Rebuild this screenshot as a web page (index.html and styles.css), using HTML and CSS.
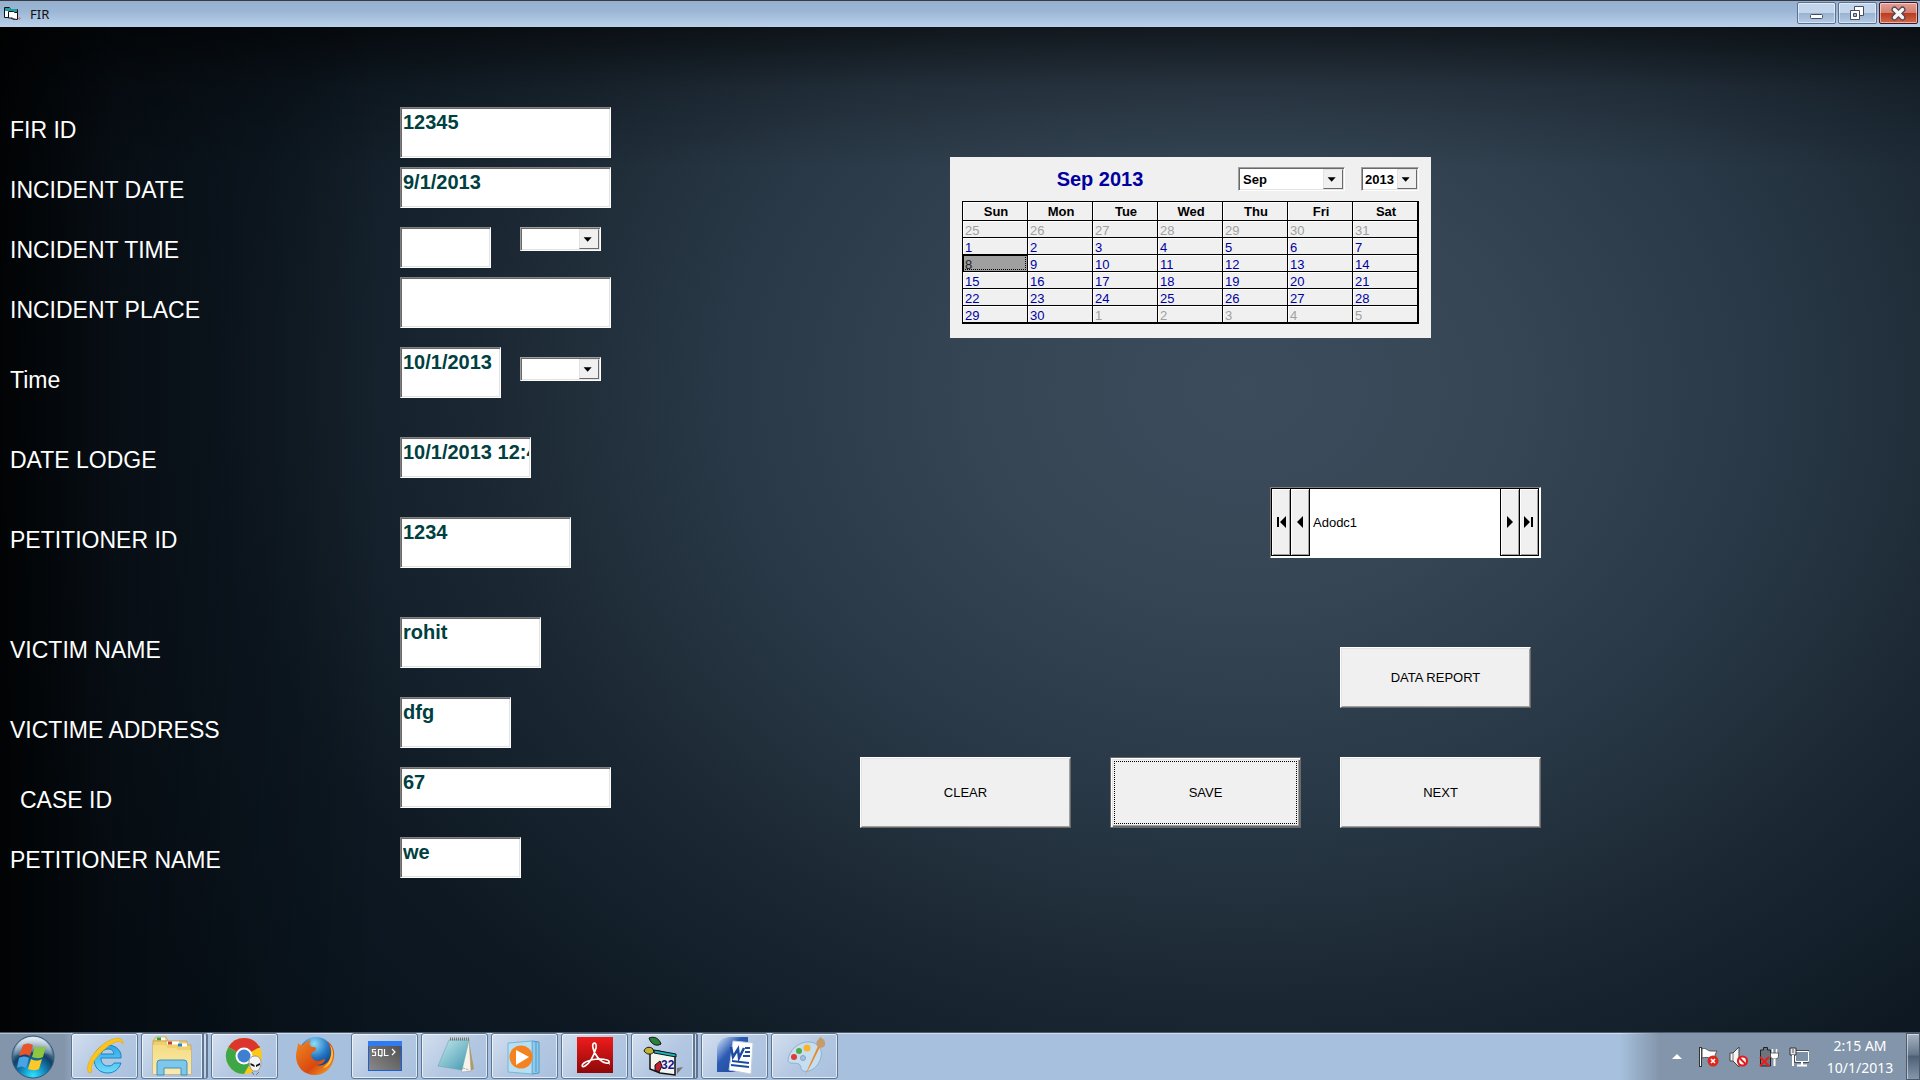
FILE: index.html
```html
<!DOCTYPE html>
<html lang="en">
<head>
<meta charset="utf-8">
<title>FIR</title>
<link rel="stylesheet" href="styles.css">
</head>
<body>
<header class="titlebar">
  <svg class="app-icon" width="17" height="14" viewBox="0 0 17 14" aria-hidden="true">
    <path d="M.500 .500h5l1 2h7v9h-2l-1 1-3-1-1-1H.500z" fill="#fff" stroke="#111"/>
    <path d="M1 1h4l1 1h7v3H9L8 4H1z" fill="#16a0a0"/>
    <path d="M4.500 4.500h5l1 1h3v7l-4-.500-1-1h-4z" fill="#fff" stroke="#111"/>
    <path d="M14 11.500h3M15.500 10v3" stroke="#d77"/>
  </svg>
  <span class="title">FIR</span>
  <div class="window-buttons">
    <button class="win-btn" type="button" aria-label="Minimize"><svg width="38" height="21" viewBox="0 0 38 21"><rect x="12.500" y="11.500" width="12" height="4" rx="1" fill="#fff" stroke="#444d5c"/></svg></button>
    <button class="win-btn" type="button" aria-label="Restore"><svg width="38" height="21" viewBox="0 0 38 21"><path d="M15.500 3.500h9v9h-9z" fill="#fff" stroke="#444d5c"/><path d="M11.500 7.500h9v9h-9z" fill="#fff" stroke="#444d5c"/><path d="M14.500 10.500h3v3h-3z" fill="#9fb6d2" stroke="#444d5c"/></svg></button>
    <button class="win-btn close" type="button" aria-label="Close"><svg width="38" height="21" viewBox="0 0 38 21"><path d="M14.500 6.500l8 8m0-8l-8 8" stroke="#4b4652" stroke-width="6" stroke-linecap="round"/><path d="M14.500 6.500l8 8m0-8l-8 8" stroke="#f5f5f5" stroke-width="3.500" stroke-linecap="round"/></svg></button>
  </div>
</header>

<main class="desktop">
  <form class="record">
    <div class="row p60"><label for="fir-id">FIR ID</label><input class="field tall full" id="fir-id" value="12345"></div>
    <div class="row p60"><label for="inc-date">INCIDENT DATE</label><input class="field full" id="inc-date" value="9/1/2013"></div>
    <div class="row p50"><label for="inc-time">INCIDENT TIME</label><input class="field w90" id="inc-time">
      <span class="combo ampm after90"><select aria-label="Incident time period"><option></option></select><svg class="arrow" width="20" height="20" viewBox="0 0 20 20"><path d="M4 8h9l-4.500 5z"/></svg></span></div>
    <div class="row p70 low"><label for="inc-place">INCIDENT PLACE</label><input class="field tall full" id="inc-place"></div>
    <div class="row p90 low"><label for="time">Time</label><input class="field tall w100" id="time" value="10/1/2013">
      <span class="combo ampm after100"><select aria-label="Time period"><option></option></select><svg class="arrow" width="20" height="20" viewBox="0 0 20 20"><path d="M4 8h9l-4.500 5z"/></svg></span></div>
    <div class="row p80"><label for="lodge">DATE LODGE</label><input class="field w130" id="lodge" value="10/1/2013 12:45:10 AM"></div>
    <div class="row p100"><label for="pet-id">PETITIONER ID</label><input class="field tall w170" id="pet-id" value="1234"></div>
    <div class="row p80 low"><label for="vic-name">VICTIM NAME</label><input class="field tall w140" id="vic-name" value="rohit"></div>
    <div class="row p70 low"><label for="vic-addr">VICTIME ADDRESS</label><input class="field tall w110" id="vic-addr" value="dfg"></div>
    <div class="row p70 low"><label class="indent" for="case-id">CASE ID</label><input class="field full" id="case-id" value="67"></div>
    <div class="row p60"><label for="pet-name">PETITIONER NAME</label><input class="field w120" id="pet-name" value="we"></div>
  </form>

  <section class="side">
    <div class="calendar">
      <div class="cal-head">
        <h2>Sep 2013</h2>
        <span class="combo month"><select aria-label="Month"><option>Sep</option></select><svg class="arrow" width="20" height="20" viewBox="0 0 20 20"><path d="M4 8h9l-4.500 5z"/></svg></span>
        <span class="combo year"><select aria-label="Year"><option>2013</option></select><svg class="arrow" width="20" height="20" viewBox="0 0 20 20"><path d="M4 8h9l-4.500 5z"/></svg></span>
      </div>
      <table>
        <thead><tr><th>Sun</th><th>Mon</th><th>Tue</th><th>Wed</th><th>Thu</th><th>Fri</th><th>Sat</th></tr></thead>
        <tbody>
          <tr class="other"><td>25</td><td>26</td><td>27</td><td>28</td><td>29</td><td>30</td><td>31</td></tr>
          <tr><td>1</td><td>2</td><td>3</td><td>4</td><td>5</td><td>6</td><td>7</td></tr>
          <tr><td class="selected">8</td><td>9</td><td>10</td><td>11</td><td>12</td><td>13</td><td>14</td></tr>
          <tr><td>15</td><td>16</td><td>17</td><td>18</td><td>19</td><td>20</td><td>21</td></tr>
          <tr><td>22</td><td>23</td><td>24</td><td>25</td><td>26</td><td>27</td><td>28</td></tr>
          <tr><td>29</td><td>30</td><td class="off">1</td><td class="off">2</td><td class="off">3</td><td class="off">4</td><td class="off">5</td></tr>
        </tbody>
      </table>
    </div>

    <div class="data-nav">
      <button type="button" aria-label="First record"><svg width="11" height="12" viewBox="0 0 11 12"><path d="M1 1h2v10H1zM10 0v12L4 6z"/></svg></button>
      <button type="button" aria-label="Previous record"><svg width="7" height="12" viewBox="0 0 7 12"><path d="M6 0v12L0 6z"/></svg></button>
      <span class="nav-caption">Adodc1</span>
      <button type="button" aria-label="Next record"><svg width="7" height="12" viewBox="0 0 7 12"><path d="M0 0v12l6-6z"/></svg></button>
      <button type="button" aria-label="Last record"><svg width="11" height="12" viewBox="0 0 11 12"><path d="M7 1h2v10H7zM0 0v12l6-6z"/></svg></button>
    </div>

    <button class="cmd report" type="button">DATA REPORT</button>
    <div class="commands">
      <button class="cmd" type="button">CLEAR</button>
      <button class="cmd default" type="button">SAVE</button>
      <button class="cmd" type="button">NEXT</button>
    </div>
  </section>
</main>

<footer class="taskbar">
  <svg width="0" height="0" class="defs" aria-hidden="true">
    <defs>
      <radialGradient id="orb" cx=".5" cy=".95" r=".9"><stop offset="0" stop-color="#2fe3ff"/><stop offset=".35" stop-color="#1183b8"/><stop offset=".6" stop-color="#123f66"/><stop offset="1" stop-color="#a9c3d6"/></radialGradient>
      <linearGradient id="gloss" x1="0" y1="0" x2="0" y2="1"><stop offset="0" stop-color="#fff" stop-opacity=".7"/><stop offset="1" stop-color="#fff" stop-opacity=".08"/></linearGradient>
      <linearGradient id="ie" x1="0" y1="0" x2="0" y2="1"><stop offset="0" stop-color="#2fa4e4"/><stop offset="1" stop-color="#6edcfb"/></linearGradient>
      <linearGradient id="folder" x1="0" y1="0" x2="0" y2="1"><stop offset="0" stop-color="#f5dc83"/><stop offset="1" stop-color="#f9eab0"/></linearGradient>
      <linearGradient id="sql" x1="1" y1="0" x2="0" y2="1"><stop offset="0" stop-color="#4c4c4c"/><stop offset="1" stop-color="#8a8a8a"/></linearGradient>
      <linearGradient id="pad" x1="0" y1="0" x2="1" y2="1"><stop offset="0" stop-color="#c5e9ef"/><stop offset="1" stop-color="#4298ae"/></linearGradient>
      <linearGradient id="pdf" x1="0" y1="0" x2="0" y2="1"><stop offset="0" stop-color="#ee1c1c"/><stop offset="1" stop-color="#8e0808"/></linearGradient>
      <linearGradient id="word" x1="0" y1="0" x2="1" y2="1"><stop offset="0" stop-color="#dce9fb"/><stop offset=".4" stop-color="#2d5cb4"/><stop offset="1" stop-color="#16428f"/></linearGradient>
      <radialGradient id="globe" cx=".45" cy=".2" r=".8"><stop offset="0" stop-color="#8fdcf8"/><stop offset=".5" stop-color="#2477c4"/><stop offset="1" stop-color="#0c2b6d"/></radialGradient>
      <linearGradient id="fox" x1="0" y1="0" x2="1" y2="1"><stop offset="0" stop-color="#f08a24"/><stop offset=".6" stop-color="#d9480f"/><stop offset="1" stop-color="#f7b52c"/></linearGradient>
    </defs>
  </svg>
  <button class="start" type="button" aria-label="Start">
    <svg width="44" height="44" viewBox="0 0 44 44"><circle cx="22" cy="22" r="21" fill="url(#orb)" stroke="#2f5878"/><path d="M3 21a19 19 0 0 1 38 0c-10-6-26-4-38 0z" fill="url(#gloss)"/>
      <path d="M12 10c4-2 7-2 10 0l-3 11c-3-2-7-2-11 0z" fill="#e8552b"/><path d="M24 11c3 2 7 2 11 0l-3 11c-4 2-8 1-11 0z" fill="#8fc63f"/><path d="M8 23c4-2 7-2 10 0l-3 10c-3-2-6-2-9 0z" fill="#4ba3e3"/><path d="M20 24c4 2 7 2 11 0l-3 10c-4 2-8 1-11 0z" fill="#fcc927"/></svg>
  </button>
  <nav class="tasks">
    <button class="task" type="button" aria-label="Internet Explorer"><svg width="40" height="40" viewBox="0 0 40 40"><path d="M36 22H16c0 5 3 8 7 8 3 0 5-1 6-3h7c-2 6-7 10-13 10-9 0-14-6-14-14S15 9 23 9s14 6 13 13zM16 18h13c-1-4-3-5-6-5s-6 2-7 5z" fill="url(#ie)" stroke="#1785c9"/><path d="M4 37C-1 31 8 15 20 7 29 1 39 0 38 8c-2-5-10-2-17 4C10 21 4 31 7 36z" fill="#fbc51d" stroke="#e2a40c" stroke-width=".6"/></svg></button>
    <button class="task stack-2" type="button" aria-label="Explorer"><svg width="40" height="40" viewBox="0 0 40 40"><path d="M1 5l3-4h10l2 4z" fill="#f7df8a" stroke="#cfa94f"/><path d="M5 3h8" stroke="#fff" stroke-width="3"/><path d="M5 3h4" stroke="#2e9a58" stroke-width="3"/><path d="M1 5h34v4h4v29H1z" fill="#efcf70" stroke="#cfa94f"/><path d="M15 7h12M27 9h8" stroke="#fff" stroke-width="3"/><path d="M16 7h4" stroke="#cf3b35" stroke-width="3"/><path d="M26 9h4" stroke="#2c7fcb" stroke-width="3"/><path d="M1 9h12l3 3h8l2 2h13v24H1z" fill="url(#folder)"/><path d="M5 39V27q0-3 3-3h24q3 0 3 3v12h-6v-7H12v7z" fill="#7dc7ea" stroke="#438fb8"/></svg></button>
    <button class="task" type="button" aria-label="Chrome"><svg width="40" height="40" viewBox="0 0 40 40"><circle cx="19" cy="20" r="18" fill="#fbc916"/><path d="M19 20L3.400 11A18 18 0 0 1 34.600 11z" fill="#dc352b"/><path d="M3.400 11A18 18 0 0 0 19 38l8-14-8-4z" fill="#3fa648"/><path d="M19 11h15.600" stroke="#dc352b" stroke-width="2"/><circle cx="19" cy="20" r="8.500" fill="#fff"/><circle cx="19" cy="20" r="6.500" fill="#3f7fd0"/><path d="M24 26c0-4 3-6 6-6 4 0 6 3 6 7 0 4-2 6-3 8h-5c-2-2-4-5-4-9z" fill="#f4f4f4" stroke="#999"/><path d="M25.500 27l4 2v2l-4-2zM35 27l-4 2v2l4-2z" fill="#111"/><path d="M27 36l2 3m5-3l-3 3" stroke="#777"/></svg></button>
    <button class="task flat" type="button" aria-label="Firefox"><svg width="40" height="40" viewBox="0 0 40 40"><circle cx="21" cy="18" r="17" fill="url(#globe)"/><path d="M3 7c1 2 3 2 5 2 2-3 5-4 8-5-2 3-2 5 1 7 3 0 4 0 4 2s-4 3-5 5c0 4 3 7 7 7 3 0 5-2 7-2 0 3-4 6-9 6 9 2 15-4 15-12 0-5-2-9-4-12 6 4 8 10 7 17-2 10-9 17-19 17C9 39 1 31 1 20 1 15 3 11 3 7z" fill="url(#fox)"/><path d="M35 9c3 8 1 17-7 23 6-1 10-7 10-14 0-4-1-7-3-9z" fill="#fbc33b"/></svg></button>
    <button class="task" type="button" aria-label="SQL command line"><svg width="40" height="40" viewBox="0 0 40 40"><rect x="3.500" y="5.500" width="33" height="29" fill="url(#sql)" stroke="#1d5fd8"/><path d="M3 5h34v5H3z" fill="#2f7bf2"/><path d="M11 13.500H7.500v2.500h3v3.500H7M13.500 13.500h3.500v6h-3.500zM16 19v2M19.500 13v6.500h4M27 13l3 3-3 3" fill="none" stroke="#fff" stroke-width="1.200"/></svg></button>
    <button class="task" type="button" aria-label="Notepad"><svg width="40" height="40" viewBox="0 0 40 40"><path d="M34 5l5 28-6 3z" fill="#b39a63"/><path d="M16 4l18-1 2 32-9 1z" fill="#f4f4ec" stroke="#999" stroke-width=".5"/><path d="M14 4h20l-7 30L3 30z" fill="url(#pad)" stroke="#699aa5" stroke-width=".5"/><path d="M15 3h19" stroke="#70776f" stroke-width="3" stroke-dasharray="1 1"/><path d="M28 32l6 2" stroke="#aaa" stroke-dasharray="2 1"/></svg></button>
    <button class="task" type="button" aria-label="Media Player"><svg width="40" height="40" viewBox="0 0 40 40"><path d="M27 5l7 1v31l-7 1z" fill="#8fcaea" stroke="#4a99c8"/><path d="M31 6v30" stroke="#4a99c8"/><path d="M3 7l24-2v33L3 36z" fill="#b7def1" stroke="#74b6da"/><circle cx="16" cy="21" r="11.500" fill="#f58220"/><path d="M11 14l13 7-13 8z" fill="#fff"/></svg></button>
    <button class="task" type="button" aria-label="Adobe Reader"><svg width="40" height="40" viewBox="0 0 40 40"><path d="M2 1h36v36H2z" fill="url(#pdf)"/><path d="M18 8c2-2 4 0 3 4-2 7-6 15-11 18-3 2-4-1-1-3 6-4 17-5 23-3 3 1 3 4-1 3-6-1-12-9-13-15-.500-2-.500-3 0-4z" fill="none" stroke="#fff" stroke-width="1.700"/><path d="M34 28h1" stroke="#fff"/></svg></button>
    <button class="task stack-1" type="button" aria-label="Project"><svg width="40" height="40" viewBox="0 0 40 40"><path d="M34 32l6-1-6 7z" fill="#777"/><path d="M7 15h8l17 4v20l-15-2-10-4z" fill="#f5f5ef" stroke="#111" stroke-width="1.500"/><path d="M11 14l22 4v3l-22-4z" fill="#15b5bd" stroke="#111"/><path d="M6 2c5-2 10 0 12 6-5 3-10 0-12-6z" fill="#28823a" stroke="#111"/><path d="M1 15c1-4 6-5 9-2l1 3c-3 3-7 3-10-1z" fill="#c4b331" stroke="#111"/><path d="M12 29l5-4 2 5-3 6-4-2z" fill="#c2202d" stroke="#111"/><text x="18" y="33" class="icon-num">32</text></svg></button>
    <button class="task" type="button" aria-label="Word"><svg width="40" height="40" viewBox="0 0 40 40"><path d="M2 36V12Q3 2 14 1h19v35z" fill="url(#word)"/><path d="M18 5l20 2-2 31-22-4z" fill="#fff" stroke="#c3cfe3"/><path d="M16 11l2 10 5-8 1 9 5-10" fill="none" stroke="#1d4ba0" stroke-width="2.500"/><path d="M30 12h5M30 16h5M28 20h7M17 25l17 2M16 29l18 2" stroke="#1d4ba0" stroke-width="2"/></svg></button>
    <button class="task" type="button" aria-label="Paint"><svg width="40" height="40" viewBox="0 0 40 40"><path d="M3 24C4 14 14 5 25 6c8 1 13 7 11 15-2 9-10 16-18 14-3-1-1-5-4-7-4-2-11 1-11-4z" fill="#c7def0" stroke="#8bb3d3"/><circle cx="18" cy="22" r="2.500" fill="#a7bfdb" stroke="#7da3c4"/><circle cx="9" cy="21" r="3" fill="#df3d35"/><circle cx="14" cy="15" r="3" fill="#4fac45"/><circle cx="22" cy="12" r="3.500" fill="#f6b52b"/><path d="M33 10L20 39l6-10 9-18z" fill="#e8892c"/><path d="M32 10c-2-5 2-6 3-9 3 2 6 3 5 8-1 3-5 4-8 1z" fill="#c69c6d"/></svg></button>
  </nav>
  <div class="tray">
    <svg width="10" height="6" viewBox="0 0 10 6" class="chevron"><path d="M5 0l5 5H0z" fill="#fff"/></svg>
    <svg width="20" height="20" viewBox="0 0 20 20"><path d="M1.500 0v20" stroke="#333" stroke-width="3"/><path d="M1.500 1v18" stroke="#fff"/><path d="M3 2c4-2 5 2 9 2h6l-2 4 1 4c-5 1-6-3-14-1z" fill="#fff" stroke="#555"/><circle cx="14" cy="14" r="5.500" fill="#d9291f"/><path d="M12 12l4 4m0-4l-4 4" stroke="#fff" stroke-width="1.600"/></svg>
    <svg width="20" height="20" viewBox="0 0 20 20"><path d="M1 6h3l6-6v20l-6-6H1z" fill="#f4f4f4" stroke="#444"/><path d="M4 6v8" stroke="#777"/><circle cx="13.500" cy="14" r="4.500" fill="#fff" stroke="#e01c1c" stroke-width="2.200"/><path d="M10.500 11l6 6" stroke="#e01c1c" stroke-width="2"/></svg>
    <svg width="20" height="20" viewBox="0 0 20 20"><path d="M1.500 3h3V.500h4V3h3v16h-10z" fill="#6c747e" stroke="#222"/><path d="M13.500 2v4m4-4v4" stroke="#fff" stroke-width="1.500"/><path d="M11.500 6h8v3q0 3-3 3h-2q-3 0-3-3z" fill="#fff" stroke="#333" stroke-width=".7"/><path d="M15.500 12v7" stroke="#fff" stroke-width="2"/><path d="M1 10l9 9m0-9l-9 9" stroke="#ed1c1c" stroke-width="2"/></svg>
    <svg width="20" height="20" viewBox="0 0 20 20"><path d="M6.500 4.500h13v10h-13z" fill="#7c91a6" stroke="#333" stroke-width="2.500"/><path d="M6.500 4.500h13v10h-13z" fill="#7c91a6" stroke="#fff"/><path d="M13 15v3M8 18.500h10" stroke="#fff" stroke-width="2"/><path d="M1 1h6v7H1z" fill="#e5e7ea" stroke="#333"/><path d="M4 2v4" stroke="#555"/><path d="M4 8v11" stroke="#fff" stroke-width="2"/></svg>
    <time class="clock"><span>2:15 AM</span><span>10/1/2013</span></time>
    <button class="show-desktop" type="button" aria-label="Show desktop"></button>
  </div>
</footer>
</body>
</html>
```
FILE: styles.css
```css
* { box-sizing: border-box; }

body {
  margin: 0;
  min-height: 100vh;
  display: flex;
  flex-direction: column;
  font-family: "Liberation Sans", Arial, sans-serif;
  background: #0b1219;
}

button, input, select { margin: 0; padding: 0; border: 0; border-radius: 0; font: inherit; }
svg { display: block; }

/* Title bar */
.titlebar {
  display: flex;
  align-items: center;
  height: 27px;
  padding: 0 2px 0 4px;
  border-top: 1px solid #3a3a44;
  background: linear-gradient(#95b0cf, #9cb7d5 40%, #bad1eb);
}
.title {
  margin-left: 9px;
  flex: 1;
  font: 13px/18px "Noto Sans", sans-serif;
  color: #111;
}
.window-buttons { display: flex; gap: 2px; align-self: flex-start; padding-top: 1px; }
.win-btn {
  border: 1px solid #5b7192;
  border-radius: 2px;
  background: linear-gradient(#c3d5ea 48%, #98b2d1 50%, #b5cbe5);
  box-shadow: inset 0 0 0 1px rgba(255, 255, 255, .5);
  width: 39px;
  height: 22px;
}
.close {
  border-color: #4a1420;
  background: linear-gradient(#e0a094, #d27f70 48%, #b8391f 50%, #cf6a4c);
}

/* Work area */
.desktop {
  flex: 1;
  display: grid;
  grid-template-columns: minmax(620px, 43fr) minmax(700px, 53fr);
  padding: 80px 0 20px;
  background:
    linear-gradient(90deg, rgba(0, 0, 0, .85) 0, rgba(0, 0, 0, .35) 6%, rgba(0, 0, 0, 0) 20%),
    linear-gradient(rgba(0, 0, 0, .6), rgba(0, 0, 0, .2) 6%, rgba(0, 0, 0, 0) 14%),
    radial-gradient(ellipse 1260px 1000px at 65% 36%, #3c4c5c 0, #364655 20%, #293846 42%, #1a2732 62%, #0d1822 82%, #08121b 105%);
}

.record { padding-left: 10px; }
.row { display: flex; align-items: flex-start; }
.row label {
  width: 390px;
  padding-top: 10px;
  font-size: 23px;
  line-height: 26px;
  color: #fff;
}
.row.low label { padding-top: 20px; }
.row label.indent { padding-left: 10px; }
.p50 { min-height: 50px; }
.p60 { min-height: 60px; }
.p70 { min-height: 70px; }
.p80 { min-height: 80px; }
.p90 { min-height: 90px; }
.p100 { min-height: 100px; }

.field {
  height: 41px;
  padding: 3px 1px 13px 2px;
  border: 1px solid;
  border-color: #808080 #fff #fff #808080;
  background: #fff;
  box-shadow: inset 1px 1px #696969, inset -1px -1px #e3e3e3;
  font-size: 20px;
  font-weight: bold;
  line-height: 23px;
  color: #004040;
}
.field.tall { height: 51px; padding-bottom: 23px; }
.full { width: 211px; }
.w90 { width: 91px; }
.w100 { width: 101px; }
.w110 { width: 111px; }
.w120 { width: 121px; }
.w130 { width: 131px; }
.w140 { width: 141px; }
.w170 { width: 171px; }

/* Drop-downs: the arrow shares the select's grid cell */
.combo {
  display: inline-grid;
  height: 24px;
  padding: 1px;
  border: 1px solid;
  border-color: #a0a0a0 #fff #fff #a0a0a0;
  background: #fff;
  box-shadow: inset 1px 1px #696969, inset -1px -1px #e3e3e3;
}
.combo select {
  grid-area: 1 / 1;
  width: 100%;
  padding-left: 3px;
  appearance: none;
  background: transparent;
  font-size: 13px;
  font-weight: bold;
  color: #000;
}
.combo .arrow {
  grid-area: 1 / 1;
  justify-self: end;
  pointer-events: none;
  background: #f0f0f0;
  border: 1px solid;
  border-color: #e3e3e3 #696969 #696969 #e3e3e3;
}
.ampm { width: 81px; }
.after90 { margin-left: 29px; }
.after100 { margin: 10px 0 0 19px; }

/* Right side */
.side {
  display: flex;
  flex-direction: column;
  width: 681px;
  padding-top: 50px;
}

.calendar {
  align-self: flex-start;
  width: 481px;
  margin-left: 90px;
  padding: 10px 12px 14px;
  background: #f0f0f0;
}
.cal-head { display: flex; gap: 16px; height: 34px; }
.cal-head h2 {
  flex: 1;
  margin: 0;
  padding-left: 16px;
  font-size: 20px;
  line-height: 24px;
  text-align: center;
  color: #0000a0;
}
.month { width: 107px; }
.year { width: 58px; }
.year select { padding-left: 2px; }

.calendar table {
  width: 457px;
  table-layout: fixed;
  border-collapse: separate;
  border-spacing: 0;
  border: solid #000;
  border-width: 0 2px 2px 0;
  font-size: 13px;
}
.calendar th, .calendar td {
  padding: 0;
  border: solid #000;
  border-width: 1px 0 0 1px;
  box-shadow: inset 1px 1px #fff;
}
.calendar th { height: 19px; padding: 2px 0 0 2px; line-height: 16px; }
.calendar td { height: 17px; padding: 3px 0 0 2px; line-height: 13px; color: #0000a0; }
.calendar .other td, .calendar td.off { color: #a0a0a0; }
.calendar td.selected {
  background: #a0a0a0;
  color: #222;
  box-shadow: inset 1px 1px #000;
  outline: 1px dotted #000;
  outline-offset: -2px;
}

.data-nav {
  display: flex;
  align-self: flex-end;
  align-items: stretch;
  width: 271px;
  height: 71px;
  margin-top: 149px;
  padding: 0 1px 1px 0;
  border: 1px solid;
  border-color: #808080 #fff #fff #808080;
  background: #fff;
}
.data-nav button {
  display: grid;
  place-items: center;
  width: 20px;
  height: 68px;
  border: 1px solid #000;
  background: #f0f0f0;
  box-shadow: inset 1px 1px #fff, inset -1px -1px #a0a0a0;
}
.data-nav button + button { margin-left: -1px; }
.nav-caption {
  flex: 1;
  padding-left: 3px;
  border-top: 1px solid #000;
  font-size: 13px;
  line-height: 67px;
}

.cmd {
  height: 71px;
  border: 1px solid;
  border-color: #fff #696969 #696969 #fff;
  background: #f0f0f0;
  box-shadow: inset 1px 1px #e3e3e3, inset -1px -1px #a0a0a0;
  font-size: 13px;
  color: #000;
}
.cmd.report {
  align-self: flex-end;
  width: 191px;
  height: 61px;
  margin: 89px 10px 0 0;
}
.commands {
  display: grid;
  grid-template-columns: 211fr 191fr 201fr;
  gap: 39px;
  margin-top: 49px;
}
.cmd.default {
  border-color: #696969;
  box-shadow: inset 1px 1px #fff, inset 2px 2px #e3e3e3, inset -1px -1px #696969, inset -2px -2px #a0a0a0;
  outline: 1px dotted #000;
  outline-offset: -5px;
}

/* Taskbar */
.taskbar {
  display: flex;
  height: 48px;
  border-top: 1px solid #4e5c6c;
  background: #a6c0dd;
  box-shadow: inset 0 1px #d0dfef;
}
.defs { position: absolute; }
.start {
  width: 71px;
  padding-left: 11px;
  background: linear-gradient(90deg, rgba(131, 149, 170, 1) 90%, rgba(131, 149, 170, .7));
  box-shadow: inset 0 1px #b4c1d0;
}
.tasks { display: flex; gap: 3px; flex: 1; }
.task {
  width: 67px;
  height: 46px;
  display: grid;
  place-items: center;
  border: 1px solid #5f7590;
  border-radius: 3px;
  background: linear-gradient(135deg, #d3dfef, #b3c7e1 55%, #a9c1df);
  box-shadow: inset 0 0 0 1px rgba(255, 255, 255, .65);
}
.task.flat { border-color: transparent; background: none; box-shadow: none; }
.stack-2 { border-right: 6px double #5f7590; }
.stack-1 { border-right: 5px double #5f7590; }
.icon-num { font: bold 12px "Liberation Sans", sans-serif; fill: #18188c; }

.tray {
  display: flex;
  align-items: center;
  gap: 10px;
  padding-left: 52px;
  background: linear-gradient(90deg, rgba(131, 149, 170, 0), #8395aa 40px);
}
.chevron { margin-right: 7px; }
.clock {
  display: flex;
  flex-direction: column;
  width: 82px;
  font: 14px/22px "Noto Sans", sans-serif;
  text-align: center;
  color: #fff;
}
.show-desktop {
  width: 14px;
  height: 47px;
  margin-left: -5px;
  border: 1px solid #4c5a6b;
  background: linear-gradient(#a7b4c3, #66788c 45%, #4d6076 50%, #8496aa);
  box-shadow: inset 1px 1px rgba(255, 255, 255, .5);
}
```
